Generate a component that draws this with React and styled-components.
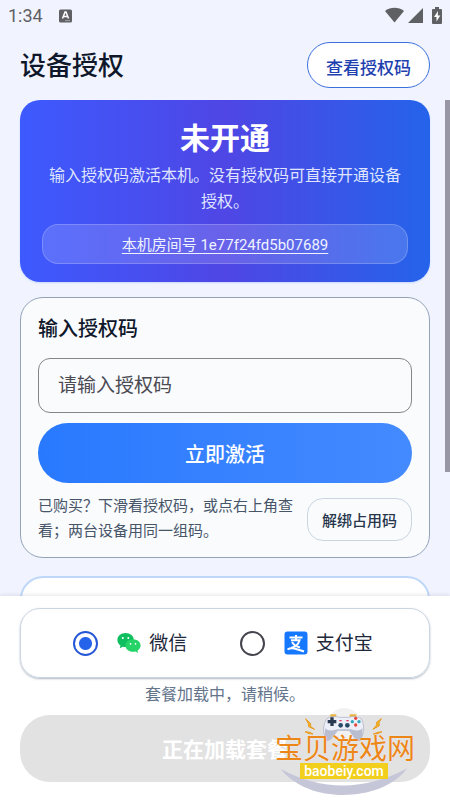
import React, { useState } from "react";
import styled, { createGlobalStyle } from "styled-components";

const GlobalStyle = createGlobalStyle`
  * {
    box-sizing: border-box;
  }
  body {
    margin: 0;
    background: #f1f4ff;
    font-family: Roboto, "Noto Sans CJK SC", sans-serif;
    color: #0f172a;
  }
  h1, h2, p {
    margin: 0;
  }
  button, input {
    font-family: inherit;
  }
`;

const Screen = styled.div`
  height: 100vh;
  display: flex;
  flex-direction: column;
  overflow: hidden;
  background: #f1f4ff;
`;

const StatusBar = styled.div`
  height: 32px;
  padding: 0 8px;
  display: flex;
  align-items: center;
  gap: 16px;
  color: #5f6064;
  flex-shrink: 0;
`;

const Time = styled.span`
  font-size: 18px;
  line-height: 32px;
`;

const StatusIcons = styled.div`
  margin-left: auto;
  padding-bottom: 2px;
  display: flex;
  align-items: center;
  gap: 4px;
`;

const BatterySlot = styled.span`
  padding-left: 5px;
  display: flex;
`;

const TopBar = styled.header`
  height: 68px;
  padding: 0 20px 2px;
  display: flex;
  align-items: center;
  justify-content: space-between;
  flex-shrink: 0;
`;

const PageTitle = styled.h1`
  padding-top: 2px;
  font-size: 26px;
  line-height: 36px;
  font-weight: 500;
`;

const ViewCodeBtn = styled.button`
  height: 46px;
  padding: 2px 18px 0;
  border: 1px solid #3b6fdc;
  border-radius: 23px;
  background: #fff;
  color: #1e40af;
  font-size: 17px;
  font-weight: 500;
`;

const ScrollArea = styled.div`
  position: relative;
  flex: 1;
  min-height: 0;
  overflow: hidden;
`;

const ScrollThumb = styled.div`
  position: absolute;
  top: 0;
  right: 0;
  width: 5px;
  height: 75%;
  background: #9997a5;
`;

const Content = styled.main`
  padding: 0 20px;
  display: flex;
  flex-direction: column;
`;

const Hero = styled.section`
  padding: 20px 22px 18px;
  border-radius: 20px;
  background: linear-gradient(90deg, #3d5afe 0%, #4f46e5 50%, #2563eb 100%);
  box-shadow: 0 1px 2px rgba(37, 99, 235, 0.2);
  display: flex;
  flex-direction: column;
  align-items: center;
  color: #fff;
`;

const HeroTitle = styled.h2`
  font-size: 30px;
  line-height: 38px;
  font-weight: 700;
`;

const HeroText = styled.p`
  margin-top: 5px;
  font-size: 16px;
  line-height: 26px;
  text-align: center;
  color: #dfe5fe;
`;

const RoomBtn = styled.button`
  width: 100%;
  height: 40px;
  margin-top: 9px;
  padding-bottom: 3px;
  border: 1px solid rgba(255, 255, 255, 0.2);
  border-radius: 16px;
  background: rgba(255, 255, 255, 0.15);
  color: #eef2ff;
  font-size: 15px;
  text-decoration: underline;
  text-decoration-thickness: 1px;
  text-underline-offset: 3px;
`;

const Card = styled.section`
  margin-top: 15px;
  padding: 17px 17px 13px;
  border: 1px solid #94a3b8;
  border-radius: 23px;
  background: #f9fbfd;
`;

const PlanCard = styled.section`
  margin-top: 18px;
  height: 120px;
  border: 2px solid #bfd7f9;
  border-radius: 23px;
  background: #fff;
`;

const CodeForm = styled.form`
  display: flex;
  flex-direction: column;
`;

const CodeLabel = styled.label`
  font-size: 20px;
  line-height: 28px;
  font-weight: 500;
`;

const CodeInput = styled.input`
  height: 55px;
  margin-top: 15px;
  padding: 0 19px;
  border: 1px solid #85858a;
  border-radius: 12px;
  background: transparent;
  font-size: 19px;
  color: #0f172a;
  &::placeholder {
    color: #4b4952;
    opacity: 1;
  }
`;

const ActivateBtn = styled.button`
  height: 60px;
  margin-top: 10px;
  border: none;
  border-radius: 30px;
  background: linear-gradient(90deg, #2979ff, #448aff);
  color: #fff;
  font-size: 20px;
  font-weight: 500;
`;

const HintRow = styled.div`
  margin-top: 11px;
  display: flex;
  align-items: center;
  gap: 12px;
`;

const Hint = styled.p`
  flex: 1;
  font-size: 15px;
  line-height: 25px;
  color: #475569;
`;

const UnbindBtn = styled.button`
  height: 43px;
  padding: 0 14px;
  border: 1px solid #cbd5e1;
  border-radius: 16px;
  background: transparent;
  color: #27364b;
  font-size: 15px;
  font-weight: 500;
`;

const PayBar = styled.footer`
  position: relative;
  padding: 12px 20px 18px;
  background: #fff;
  box-shadow: 0 -1px 4px rgba(15, 23, 42, 0.1);
  flex-shrink: 0;
`;

const PayMethods = styled.div`
  height: 70px;
  padding-right: 4px;
  border: 1px solid #cbd5e1;
  border-radius: 20px;
  box-shadow: 0 1px 2px rgba(100, 116, 139, 0.5);
  display: flex;
  align-items: center;
  justify-content: space-evenly;
`;

const PayOption = styled.label`
  display: flex;
  align-items: center;
  font-size: 19px;
  line-height: 28px;
  color: #1e293b;
  svg {
    margin: 0 8px 0 19px;
  }
`;

const PayName = styled.span`
  padding-top: 2px;
`;

const Radio = styled.input`
  appearance: none;
  width: 25px;
  height: 25px;
  margin: 0;
  border: 2px solid #45434d;
  border-radius: 50%;
  &:checked {
    border-color: #2557d6;
    background: radial-gradient(circle, #2563eb 6px, transparent 7px);
  }
`;

const PayTip = styled.p`
  padding: 5px 0 8px;
  font-size: 16px;
  line-height: 24px;
  text-align: center;
  color: #64748b;
`;

const SubmitBtn = styled.button`
  width: 100%;
  height: 67px;
  padding-bottom: 2px;
  border: none;
  border-radius: 30px;
  background: #e2e2e2;
  color: #fff;
  font-size: 21px;
  font-weight: 700;
`;

const SiteMark = styled.div`
  position: absolute;
  right: 35px;
  bottom: 0;
  width: 140px;
  height: 95px;
  padding-top: 32px;
  display: flex;
  flex-direction: column;
  align-items: center;
  pointer-events: none;
  svg {
    position: absolute;
    inset: 0;
  }
`;

const SiteName = styled.span`
  position: relative;
  font-size: 28px;
  line-height: 26px;
  white-space: nowrap;
  color: #ec8618;
  text-shadow: 0 0 1px #fff;
`;

const SiteUrl = styled.span`
  position: relative;
  margin-right: 2px;
  padding: 0 4px;
  background: #f2cf1d;
  color: #fff;
  font-size: 14px;
  font-weight: 500;
  line-height: 16px;
`;

function KeyboardIcon() {
  return (
    <svg width="13" height="14" viewBox="0 0 13 14">
      <rect width="13" height="13" y="0.5" rx="1.5" fill="#5f6064" />
      <path d="M3.5 9.5 6 3h1l2.5 6.5M4.5 7.5h4" fill="none" stroke="#fff" strokeWidth="1.5" />
      <path d="M6 11.7h5" stroke="#b5b5ba" strokeWidth="0.8" />
    </svg>
  );
}

function WifiIcon() {
  return (
    <svg width="19" height="16" viewBox="0 0 19 16">
      <path d="M0 4C5.5-.4 13.5-.4 19 4L9.500 15.500z" fill="#5f6064" />
    </svg>
  );
}

function SignalIcon() {
  return (
    <svg width="15" height="15" viewBox="0 0 15 15">
      <path d="M15 0v15H0z" fill="#5f6064" />
    </svg>
  );
}

function BatteryIcon() {
  return (
    <svg width="10" height="17" viewBox="4 0 10 17">
      <path d="M7 0h4v2h2q1 0 1 1v13q0 1-1 1H5q-1 0-1-1V3q0-1 1-1h2z" fill="#5f6064" />
      <path d="M10 4 6 10h2.500v4.500L12.300 8.500H9.800z" fill="#fff" />
    </svg>
  );
}

function WechatIcon() {
  return (
    <svg width="24" height="22" viewBox="0 0 24 22">
      <path
        d="M8.500 1C3.800 1 .4 4.100.4 8c0 2.300 1.200 4.200 3.100 5.500L2.700 16.300l3.100-1.600c.9.3 1.800.4 2.700.4 4.700 0 8.300-3.100 8.300-7.100S13.200 1 8.500 1z"
        fill="#0fbf5f"
      />
      <circle cx="5.800" cy="6" r="1" fill="#fff" />
      <circle cx="11.300" cy="6" r="1" fill="#fff" />
      <path
        d="M16 7.200c-4.200 0-7.600 2.800-7.600 6.300s3.400 6.300 7.600 6.300c.9 0 1.800-.1 2.600-.4l2.600 1.500-.7-2.400c1.900-1.200 3.100-3 3.100-5 0-3.500-3.400-6.300-7.600-6.300z"
        fill="#25d366"
      />
      <circle cx="13.500" cy="11.800" r="0.900" fill="#fff" />
      <circle cx="18.500" cy="11.800" r="0.900" fill="#fff" />
    </svg>
  );
}

function AlipayIcon() {
  return (
    <svg width="24" height="24" viewBox="0 0 24 24">
      <rect x="0.500" y="0.500" width="23" height="23" rx="3" fill="#1677ff" />
      <path
        d="M12 4v5M5.500 6.500h13M7 9.300h8.500C14.500 13 11.500 16 7 17"
        fill="none"
        stroke="#fff"
        strokeWidth="2"
      />
      <path d="M8 11c1.500 2.500 4 4.500 8 5.500" fill="none" stroke="#fff" strokeWidth="2" />
      <path d="M3.500 18.500c4-2.500 8-1 16.500 2" fill="none" stroke="#fff" strokeWidth="2" />
    </svg>
  );
}

function GamepadArt() {
  return (
    <svg width="140" height="95" viewBox="45 30 420 285">
      <circle cx="253" cy="88" r="49" fill="#f1f1f2" />
      {/* smile under the url */}
      <path d="M62 222Q250 322 442 220C400 275 325 300 250 300S105 275 62 222z" fill="#c5c7d9" />
      <path d="M211 62h18M269 62h20" stroke="#eab543" strokeWidth="9" />
      <path
        d="M200 72q16-12 38-5h28q24-7 38 5c10 16 9 44-2 58q-14 10-21-6l-13-18h-34l-15 18q-8 17-21 6c-11-14-9-42 2-58z"
        fill="#eceef8"
        stroke="#a7aac0"
        strokeWidth="2"
      />
      <path d="M196 100q10 12 35 3h42q25 9 34-3 2 20-2 36-12 8-26-13l-12-17h-34l-15 18q-13 20-22 12-4-16 0-36z" fill="#b9bdd0" />
      <path d="M216 67v26M203 80h26" stroke="#29394f" strokeWidth="10" />
      <circle cx="287" cy="70" r="5" fill="#e9453f" />
      <circle cx="287" cy="90" r="5" fill="#e9453f" />
      <circle cx="277" cy="80" r="5" fill="#31a6bc" />
      <circle cx="297" cy="80" r="5" fill="#31a6bc" />
      <circle cx="242" cy="91" r="7" fill="#294b67" />
      <circle cx="262" cy="91" r="7" fill="#294b67" />
      <path d="M238 77h7M259 77h7" stroke="#e53b62" strokeWidth="4" />
      <path d="m137 71 15 15 0 9 12 8-18-8-1-9zM364 71l-14 11-1 9-10 12 19-11-1-9z" fill="#f3b329" stroke="#e99c22" strokeWidth="3" />
      <path d="m135 110 14 2 10 5-12-1zM366 110l-12 2-14 5 13-1z" fill="#f3b329" stroke="#e99c22" strokeWidth="3" />
    </svg>
  );
}

function App() {
  const [code, setCode] = useState("");
  const [payType, setPayType] = useState("wechat");

  const handleSubmit = (e) => {
    e.preventDefault();
  };

  return (
    <Screen>
      <GlobalStyle />
      <StatusBar>
        <Time>1:34</Time>
        <KeyboardIcon />
        <StatusIcons>
          <WifiIcon />
          <SignalIcon />
          <BatterySlot>
            <BatteryIcon />
          </BatterySlot>
        </StatusIcons>
      </StatusBar>
      <TopBar>
        <PageTitle>设备授权</PageTitle>
        <ViewCodeBtn type="button">查看授权码</ViewCodeBtn>
      </TopBar>
      <ScrollArea>
        <Content>
          <Hero>
            <HeroTitle>未开通</HeroTitle>
            <HeroText>输入授权码激活本机。没有授权码可直接开通设备授权。</HeroText>
            <RoomBtn type="button">本机房间号 1e77f24fd5b07689</RoomBtn>
          </Hero>
          <Card>
            <CodeForm onSubmit={handleSubmit}>
              <CodeLabel htmlFor="code">输入授权码</CodeLabel>
              <CodeInput
                id="code"
                value={code}
                placeholder="请输入授权码"
                onChange={(e) => setCode(e.target.value)}
              />
              <ActivateBtn type="submit">立即激活</ActivateBtn>
            </CodeForm>
            <HintRow>
              <Hint>已购买？下滑看授权码，或点右上角查看；两台设备用同一组码。</Hint>
              <UnbindBtn type="button">解绑占用码</UnbindBtn>
            </HintRow>
          </Card>
          <PlanCard />
        </Content>
        <ScrollThumb />
      </ScrollArea>
      <PayBar>
        <PayMethods>
          <PayOption>
            <Radio
              type="radio"
              name="pay"
              checked={payType === "wechat"}
              onChange={() => setPayType("wechat")}
            />
            <WechatIcon />
            <PayName>微信</PayName>
          </PayOption>
          <PayOption>
            <Radio
              type="radio"
              name="pay"
              checked={payType === "alipay"}
              onChange={() => setPayType("alipay")}
            />
            <AlipayIcon />
            <PayName>支付宝</PayName>
          </PayOption>
        </PayMethods>
        <PayTip>套餐加载中，请稍候。</PayTip>
        <SubmitBtn type="button" disabled>
          正在加载套餐
        </SubmitBtn>
        <SiteMark>
          <GamepadArt />
          <SiteName>宝贝游戏网</SiteName>
          <SiteUrl>baobeiy.com</SiteUrl>
        </SiteMark>
      </PayBar>
    </Screen>
  );
}

export default App;
